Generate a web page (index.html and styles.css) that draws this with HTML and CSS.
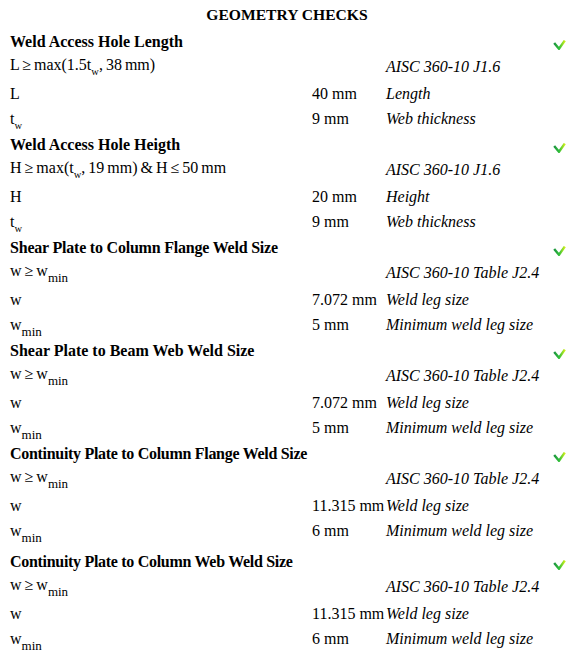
FILE: index.html
```html
<!DOCTYPE html>
<html>
<head>
<meta charset="utf-8">
<link rel="stylesheet" href="styles.css">
</head>
<body>
<svg class="defs" width="0" height="0"><defs><linearGradient id="g1" x1="0" y1="0" x2="1" y2="0"><stop offset="0" stop-color="#1c9440"/><stop offset="0.5" stop-color="#34c23a"/><stop offset="1" stop-color="#cdee1a"/></linearGradient></defs></svg>
<div class="title">GEOMETRY CHECKS</div>

<div class="section">
  <div class="row hdr"><span class="name">Weld Access Hole Length</span><span class="chk"><svg width="13" height="10" viewBox="0 0 13 10"><polyline points="1.2,3 6,8.8 11.8,0.6" fill="none" stroke="url(#g1)" stroke-width="2.4"/></svg></span></div>
  <div class="row formula"><span>L ≥ max(1.5t<sub class="s1">w</sub>, 38 mm)</span><span></span><span class="desc">AISC 360-10 J1.6</span></div>
  <div class="row v1"><span>L</span><span>40 mm</span><span class="desc">Length</span></div>
  <div class="row v2"><span>t<sub class="s1">w</sub></span><span>9 mm</span><span class="desc">Web thickness</span></div>
</div>

<div class="section">
  <div class="row hdr"><span class="name">Weld Access Hole Heigth</span><span class="chk"><svg width="13" height="10" viewBox="0 0 13 10"><polyline points="1.2,3 6,8.8 11.8,0.6" fill="none" stroke="url(#g1)" stroke-width="2.4"/></svg></span></div>
  <div class="row formula"><span>H ≥ max(t<sub class="s1">w</sub>, 19 mm) &amp; H ≤ 50 mm</span><span></span><span class="desc">AISC 360-10 J1.6</span></div>
  <div class="row v1"><span>H</span><span>20 mm</span><span class="desc">Height</span></div>
  <div class="row v2"><span>t<sub class="s1">w</sub></span><span>9 mm</span><span class="desc">Web thickness</span></div>
</div>

<div class="section">
  <div class="row hdr"><span class="name tight2">Shear Plate to Column Flange Weld Size</span><span class="chk"><svg width="13" height="10" viewBox="0 0 13 10"><polyline points="1.2,3 6,8.8 11.8,0.6" fill="none" stroke="url(#g1)" stroke-width="2.4"/></svg></span></div>
  <div class="row formula"><span>w ≥ w<sub class="s2">min</sub></span><span></span><span class="desc">AISC 360-10 Table J2.4</span></div>
  <div class="row v1"><span>w</span><span>7.072 mm</span><span class="desc">Weld leg size</span></div>
  <div class="row v2"><span>w<sub class="s2">min</sub></span><span>5 mm</span><span class="desc">Minimum weld leg size</span></div>
</div>

<div class="section">
  <div class="row hdr"><span class="name">Shear Plate to Beam Web Weld Size</span><span class="chk"><svg width="13" height="10" viewBox="0 0 13 10"><polyline points="1.2,3 6,8.8 11.8,0.6" fill="none" stroke="url(#g1)" stroke-width="2.4"/></svg></span></div>
  <div class="row formula"><span>w ≥ w<sub class="s2">min</sub></span><span></span><span class="desc">AISC 360-10 Table J2.4</span></div>
  <div class="row v1"><span>w</span><span>7.072 mm</span><span class="desc">Weld leg size</span></div>
  <div class="row v2"><span>w<sub class="s2">min</sub></span><span>5 mm</span><span class="desc">Minimum weld leg size</span></div>
</div>

<div class="section">
  <div class="row hdr"><span class="name tight1">Continuity Plate to Column Flange Weld Size</span><span class="chk"><svg width="13" height="10" viewBox="0 0 13 10"><polyline points="1.2,3 6,8.8 11.8,0.6" fill="none" stroke="url(#g1)" stroke-width="2.4"/></svg></span></div>
  <div class="row formula"><span>w ≥ w<sub class="s2">min</sub></span><span></span><span class="desc">AISC 360-10 Table J2.4</span></div>
  <div class="row v1"><span>w</span><span>11.315 mm</span><span class="desc">Weld leg size</span></div>
  <div class="row v2"><span>w<sub class="s2">min</sub></span><span>6 mm</span><span class="desc">Minimum weld leg size</span></div>
</div>

<div class="section last">
  <div class="row hdr"><span class="name tight1">Continuity Plate to Column Web Weld Size</span><span class="chk"><svg width="13" height="10" viewBox="0 0 13 10"><polyline points="1.2,3 6,8.8 11.8,0.6" fill="none" stroke="url(#g1)" stroke-width="2.4"/></svg></span></div>
  <div class="row formula"><span>w ≥ w<sub class="s2">min</sub></span><span></span><span class="desc">AISC 360-10 Table J2.4</span></div>
  <div class="row v1"><span>w</span><span>11.315 mm</span><span class="desc">Weld leg size</span></div>
  <div class="row v2"><span>w<sub class="s2">min</sub></span><span>6 mm</span><span class="desc">Minimum weld leg size</span></div>
</div>
</body>
</html>
```

FILE: styles.css
```css
html, body {
  margin: 0;
  padding: 0;
  background: #fff;
}
body {
  font-family: "Liberation Serif", "Times New Roman", serif;
  font-size: 16px;
  color: #000;
}
.defs {
  position: absolute;
  width: 0;
  height: 0;
}
.title {
  box-sizing: border-box;
  height: 31px;
  padding-top: 6px;
  line-height: 18px;
  text-align: center;
  font-weight: bold;
  font-size: 15.6px;
}
.row {
  display: grid;
  grid-template-columns: 302px 74px 1fr 14px;
  box-sizing: border-box;
  padding: 2px 8px 0 10px;
  line-height: 18px;
  white-space: nowrap;
}
.hdr {
  height: 23px;
  font-weight: bold;
}
.hdr .name {
  grid-column: 1 / 4;
}
.tight1 {
  letter-spacing: -0.3px;
}
.tight2 {
  letter-spacing: -0.21px;
}
.chk {
  grid-column: 4;
  display: flex;
  padding-top: 7px;
  margin-left: 1px;
}
.chk svg {
  display: block;
}
.formula {
  height: 29px;
}
.formula > span:first-child {
  word-spacing: -1px;
}
.formula .desc {
  padding-top: 2px;
}
.v1 {
  height: 25px;
}
.v2 {
  height: 26px;
}
.section.last {
  margin-top: 5px;
}
.desc {
  font-style: italic;
}
sub {
  line-height: 0;
}
sub.s1 {
  font-size: 10.5px;
  vertical-align: -5px;
}
sub.s2 {
  font-size: 13px;
  vertical-align: -6px;
}
```
